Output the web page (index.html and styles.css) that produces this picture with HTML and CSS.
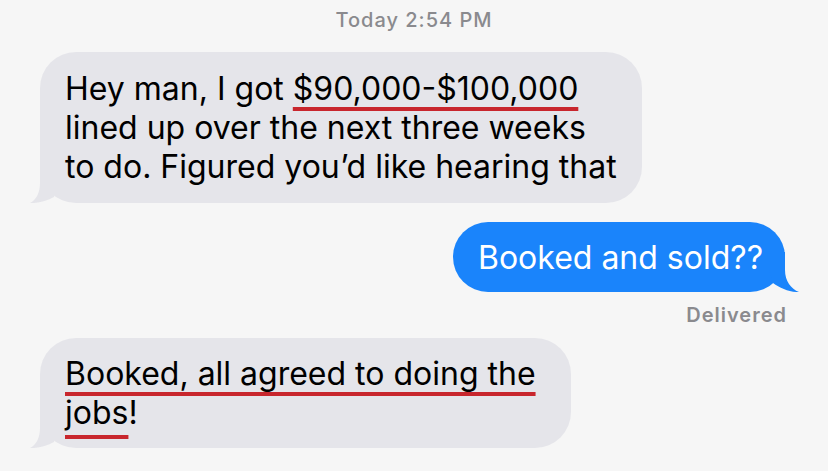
FILE: index.html
```html
<!DOCTYPE html>
<html lang="en">
<head>
<meta charset="utf-8">
<title>Messages</title>
<link rel="stylesheet" href="styles.css">
</head>
<body>
<div class="thread">
  <div class="stamp">Today 2:54 PM</div>

  <div class="row row-in">
    <div class="bubble bubble-gray">
      Hey man, I got <span class="mark">$90,000-$100,000</span><br>
      lined up over the next three weeks<br>
      to do. Figured you’d like hearing that
      <svg class="tail tail-in" width="40" height="40" viewBox="0 0 40 40"><path d="M12 0 L12 20 C12 30 8 37 2 40 C10 40.5 19 38 26 34 L32 20 L32 0 Z"/></svg>
    </div>
  </div>

  <div class="row row-out">
    <div class="bubble bubble-blue">
      Booked and sold??
      <svg class="tail tail-out" width="40" height="40" viewBox="0 0 40 40"><path d="M26 0 L26 18 C26 29 32 37 40 40 C31 40.5 21 36 14 31 L10 18 L10 0 Z"/></svg>
    </div>
  </div>
  <div class="status">Delivered</div>

  <div class="row row-in">
    <div class="bubble bubble-gray bubble-last">
      <span class="mark">Booked, all agreed to doing the</span><br>
      <span class="mark mark-low">jobs</span>!
      <svg class="tail tail-in" width="40" height="40" viewBox="0 0 40 40"><path d="M12 0 L12 20 C12 30 8 37 2 40 C10 40.5 19 38 26 34 L32 20 L32 0 Z"/></svg>
    </div>
  </div>
</div>
</body>
</html>
```

FILE: styles.css
```css
html, body {
  margin: 0;
  padding: 0;
  background: #f6f6f6;
}

body {
  font-family: "Inter", "Noto Sans", "Liberation Sans", sans-serif;
  color: #000;
}

.thread {
  display: flex;
  flex-direction: column;
  padding: 8px 41px 0 40px;
}

.stamp {
  text-align: center;
  font-size: 20px;
  line-height: 24px;
  font-weight: 500;
  letter-spacing: 1px;
  color: #8a8a8e;
  margin-left: 1px;
}

.row {
  display: flex;
}

.row-in {
  justify-content: flex-start;
  margin-top: 20px;
}

.row-out {
  justify-content: flex-end;
  margin-top: 19px;
  padding-right: 2px;
}

.bubble {
  position: relative;
  z-index: 0;
  font-size: 32px;
  line-height: 39px;
  border-radius: 36px;
  padding: 17px 25px 17px 25px;
}

.bubble-gray {
  background: #e5e5ea;
}

.bubble-blue {
  background: #1a84fb;
  color: #fff;
  border-radius: 35px;
  padding: 16px 22px 15px 25px;
}

.bubble-last {
  padding: 16px 35px 16px 25px;
}

.tail {
  position: absolute;
  bottom: 0;
  z-index: -1;
}

.tail-in {
  left: -12px;
  fill: #e5e5ea;
}

.tail-out {
  right: -14px;
  fill: #1a84fb;
}

.mark {
  text-decoration-line: underline;
  text-decoration-color: #c8262d;
  text-decoration-thickness: 4px;
  text-underline-offset: 7px;
  text-decoration-skip-ink: none;
}

.mark-low {
  text-underline-offset: 11px;
}

.status {
  text-align: right;
  font-size: 20px;
  line-height: 22px;
  font-weight: 600;
  letter-spacing: 1px;
  color: #8a8a8e;
  margin-top: 12px;
}

.row-in + .row-in,
.status + .row-in {
  margin-top: 12px;
}
```
